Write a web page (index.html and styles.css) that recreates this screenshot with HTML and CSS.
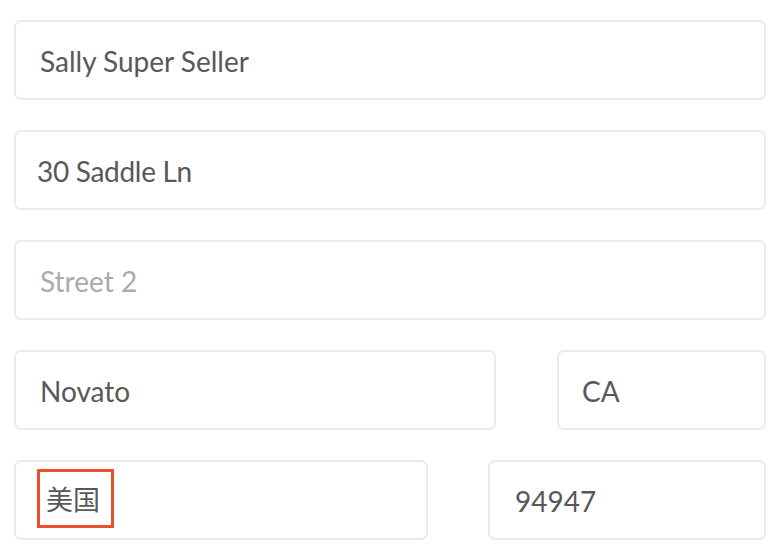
FILE: index.html
```html
<!DOCTYPE html>
<html>
<head>
<meta charset="utf-8">
<link rel="stylesheet" href="styles.css">
</head>
<body>
<form class="form">
  <div class="row"><div class="field"><span class="value">Sally Super Seller</span></div></div>
  <div class="row"><div class="field field--shift"><span class="value">30 Saddle Ln</span></div></div>
  <div class="row"><div class="field"><span class="placeholder">Street 2</span></div></div>
  <div class="row row--city">
    <div class="field field--city"><span class="value">Novato</span></div>
    <div class="field field--state"><span class="value">CA</span></div>
  </div>
  <div class="row row--country">
    <div class="field field--country"><span class="value highlight">美国</span></div>
    <div class="field field--zip"><span class="value">94947</span></div>
  </div>
</form>
</body>
</html>
```
FILE: styles.css
```css
html, body {
  margin: 0;
  padding: 0;
  background: #ffffff;
}
body {
  font-family: Lato, "Noto Sans CJK SC", sans-serif;
  width: 784px;
  height: 556px;
  overflow: hidden;
}
.form {
  display: flex;
  flex-direction: column;
  gap: 30px;
  padding: 20px 18px 0 14px;
}
.row {
  display: flex;
}
.row--city { gap: 61px; }
.row--country { gap: 60px; }
.field {
  box-sizing: border-box;
  height: 80px;
  flex: 1;
  border: 2px solid #ebebeb;
  border-radius: 7px;
  display: flex;
  align-items: center;
  padding: 2px 0 0 24px;
  font-size: 28px;
  color: #585858;
}
.field--shift { padding-left: 21px; letter-spacing: -0.3px; }
.field--city { flex: 0 0 482px; }
.field--state { flex: 0 0 209px; padding-left: 23px; }
.field--country { flex: 0 0 414px; padding: 0 0 4px 21px; }
.field--zip { flex: 0 0 278px; padding-left: 25px; }
.placeholder { color: #aaaaaa; }
.highlight {
  font-family: "Noto Sans CJK SC", sans-serif;
  font-size: 27px;
  border: 3px solid #ef4f2e;
  padding: 0 11px 0 6px;
  line-height: 53px;
  display: inline-block;
}
```
